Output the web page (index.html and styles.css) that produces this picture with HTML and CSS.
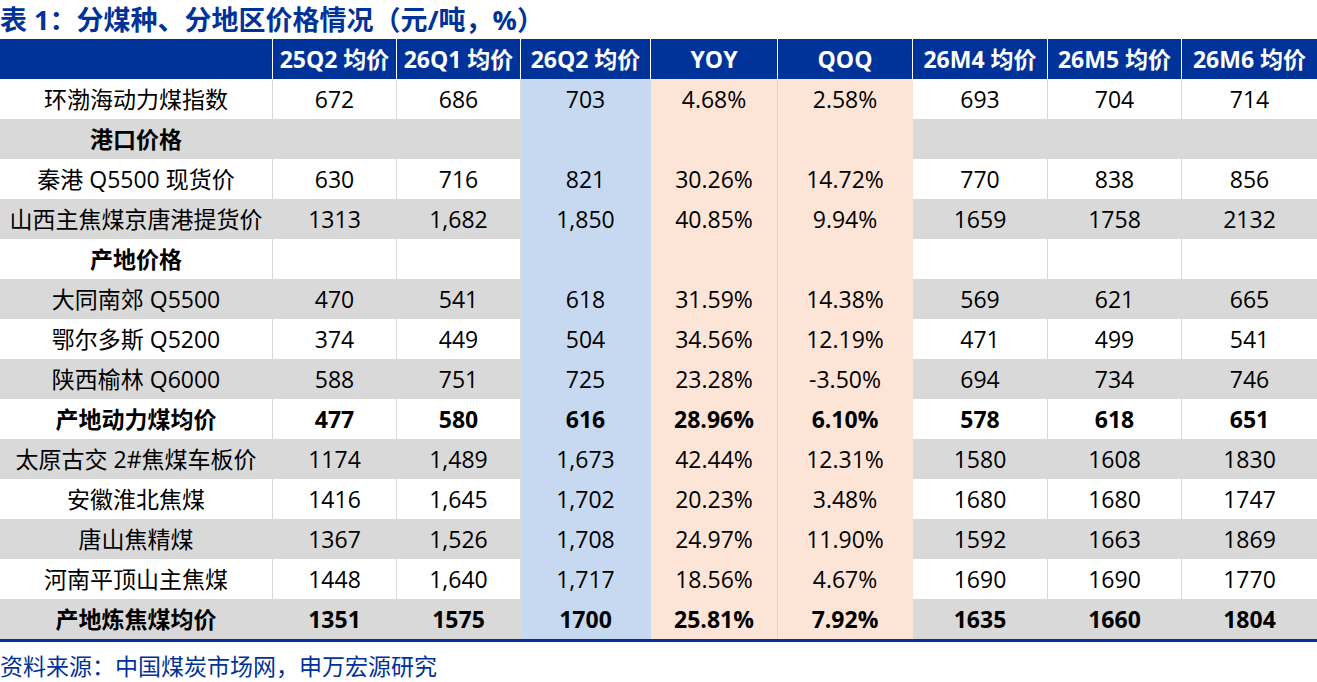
FILE: index.html
```html
<!DOCTYPE html>
<html lang="zh-CN">
<head>
<meta charset="utf-8">
<title>表 1：分煤种、分地区价格情况</title>
<link rel="stylesheet" href="styles.css">
</head>
<body>
<div class="page">
  <div class="title">表 1：分煤种、分地区价格情况（元/吨，%）</div>
  <div class="table">
    <div class="row head">
      <div class="c"></div><div class="c">25Q2 均价</div><div class="c">26Q1 均价</div><div class="c">26Q2 均价</div><div class="c">YOY</div><div class="c">QOQ</div><div class="c">26M4 均价</div><div class="c">26M5 均价</div><div class="c">26M6 均价</div>
    </div>
    <div class="row">
      <div class="c">环渤海动力煤指数</div><div class="c">672</div><div class="c">686</div><div class="c q2">703</div><div class="c yoy">4.68%</div><div class="c qoq">2.58%</div><div class="c">693</div><div class="c">704</div><div class="c">714</div>
    </div>
    <div class="row gray bold">
      <div class="c">港口价格</div><div class="c"></div><div class="c"></div><div class="c q2"></div><div class="c yoy"></div><div class="c qoq"></div><div class="c"></div><div class="c"></div><div class="c"></div>
    </div>
    <div class="row">
      <div class="c">秦港 Q5500 现货价</div><div class="c">630</div><div class="c">716</div><div class="c q2">821</div><div class="c yoy">30.26%</div><div class="c qoq">14.72%</div><div class="c">770</div><div class="c">838</div><div class="c">856</div>
    </div>
    <div class="row gray">
      <div class="c">山西主焦煤京唐港提货价</div><div class="c">1313</div><div class="c">1,682</div><div class="c q2">1,850</div><div class="c yoy">40.85%</div><div class="c qoq">9.94%</div><div class="c">1659</div><div class="c">1758</div><div class="c">2132</div>
    </div>
    <div class="row bold">
      <div class="c">产地价格</div><div class="c"></div><div class="c"></div><div class="c q2"></div><div class="c yoy"></div><div class="c qoq"></div><div class="c"></div><div class="c"></div><div class="c"></div>
    </div>
    <div class="row gray">
      <div class="c">大同南郊 Q5500</div><div class="c">470</div><div class="c">541</div><div class="c q2">618</div><div class="c yoy">31.59%</div><div class="c qoq">14.38%</div><div class="c">569</div><div class="c">621</div><div class="c">665</div>
    </div>
    <div class="row">
      <div class="c">鄂尔多斯 Q5200</div><div class="c">374</div><div class="c">449</div><div class="c q2">504</div><div class="c yoy">34.56%</div><div class="c qoq">12.19%</div><div class="c">471</div><div class="c">499</div><div class="c">541</div>
    </div>
    <div class="row gray">
      <div class="c">陕西榆林 Q6000</div><div class="c">588</div><div class="c">751</div><div class="c q2">725</div><div class="c yoy">23.28%</div><div class="c qoq">-3.50%</div><div class="c">694</div><div class="c">734</div><div class="c">746</div>
    </div>
    <div class="row bold">
      <div class="c">产地动力煤均价</div><div class="c">477</div><div class="c">580</div><div class="c q2">616</div><div class="c yoy">28.96%</div><div class="c qoq">6.10%</div><div class="c">578</div><div class="c">618</div><div class="c">651</div>
    </div>
    <div class="row gray">
      <div class="c">太原古交 2#焦煤车板价</div><div class="c">1174</div><div class="c">1,489</div><div class="c q2">1,673</div><div class="c yoy">42.44%</div><div class="c qoq">12.31%</div><div class="c">1580</div><div class="c">1608</div><div class="c">1830</div>
    </div>
    <div class="row">
      <div class="c">安徽淮北焦煤</div><div class="c">1416</div><div class="c">1,645</div><div class="c q2">1,702</div><div class="c yoy">20.23%</div><div class="c qoq">3.48%</div><div class="c">1680</div><div class="c">1680</div><div class="c">1747</div>
    </div>
    <div class="row gray">
      <div class="c">唐山焦精煤</div><div class="c">1367</div><div class="c">1,526</div><div class="c q2">1,708</div><div class="c yoy">24.97%</div><div class="c qoq">11.90%</div><div class="c">1592</div><div class="c">1663</div><div class="c">1869</div>
    </div>
    <div class="row">
      <div class="c">河南平顶山主焦煤</div><div class="c">1448</div><div class="c">1,640</div><div class="c q2">1,717</div><div class="c yoy">18.56%</div><div class="c qoq">4.67%</div><div class="c">1690</div><div class="c">1690</div><div class="c">1770</div>
    </div>
    <div class="row gray bold">
      <div class="c">产地炼焦煤均价</div><div class="c">1351</div><div class="c">1575</div><div class="c q2">1700</div><div class="c yoy">25.81%</div><div class="c qoq">7.92%</div><div class="c">1635</div><div class="c">1660</div><div class="c">1804</div>
    </div>
  </div>
  <div class="source">资料来源：中国煤炭市场网，申万宏源研究</div>
</div>
</body>
</html>
```
FILE: styles.css
```css
html, body {
  margin: 0;
  padding: 0;
  background: #ffffff;
}

.page {
  width: 1317px;
  font-family: "Open Sans", "Noto Sans CJK SC", sans-serif;
  color: #000000;
}

.title {
  height: 39px;
  line-height: 39px;
  font-size: 27px;
  font-weight: 700;
  color: #003399;
  white-space: nowrap;
}

.table {
  border-bottom: 3px solid #003399;
}

.row {
  display: grid;
  grid-template-columns: 273px 124px 124px 130px 127px 135px 135px 134px 135px;
  height: 40px;
  font-size: 23px;
}

.c {
  display: flex;
  align-items: center;
  justify-content: center;
  white-space: nowrap;
  border-right: 1px solid #d9d9d9;
  background: #ffffff;
  line-height: 1;
}

.c:last-child {
  border-right: none;
}

.row.gray .c {
  background: #d9d9d9;
}

.row.bold .c {
  font-weight: 700;
}

.row .c.q2 {
  background: #c6d9f0;
  border-right-color: #c6d9f0;
}

.row .c.yoy {
  background: #fce4d6;
  border-right-color: #d9d9d9;
}

.row .c.qoq {
  background: #fce4d6;
  border-right-color: #fce4d6;
}

.row.head .c {
  background: #003399;
  color: #ffffff;
  font-weight: 700;
  border-right: 1px solid #ffffff;
}

.row.head .c:last-child {
  border-right: none;
}

.source {
  height: 48px;
  line-height: 48px;
  font-size: 23px;
  color: #003399;
  white-space: nowrap;
}
```
